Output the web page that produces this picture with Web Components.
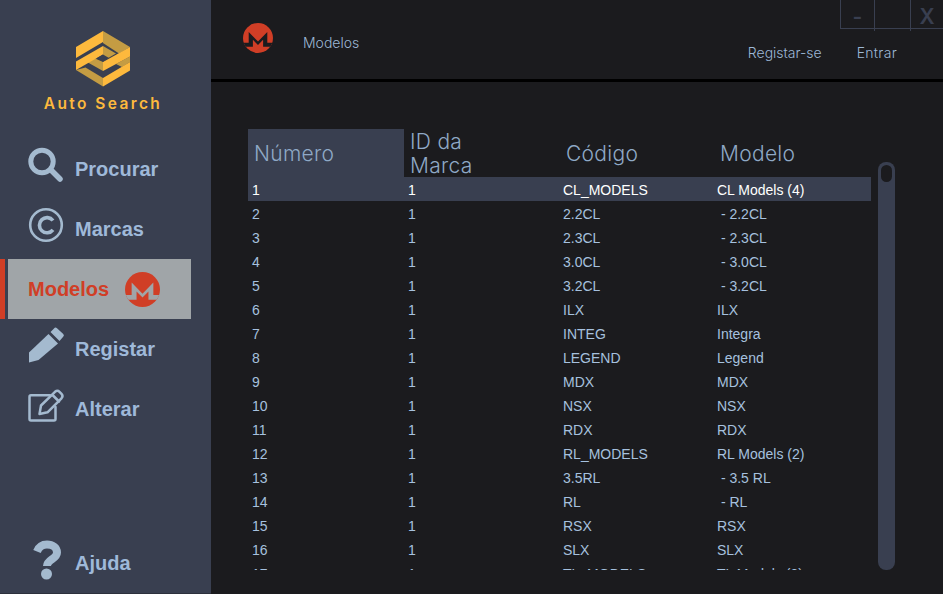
<!DOCTYPE html>
<html lang="pt">
<head>
<meta charset="utf-8">
<title>Auto Search</title>
<style>
  html, body { margin: 0; height: 100%; background: #1b1b1e; overflow: hidden; }
  app-shell { width: 943px; height: 594px; }
  .ico { display: block; width: 40px; height: 40px; overflow: visible; }
</style>
</head>
<body>
<app-shell>
  <app-sidebar slot="side">
    <nav-item>
      <svg slot="icon" class="ico" viewBox="28 149 40 40" fill="none" stroke="#a4bacf">
        <circle cx="42" cy="161.5" r="11.2" stroke-width="5"/>
        <path d="M52 171l8 8" stroke-width="5.5" stroke-linecap="round"/>
      </svg>
      Procurar
    </nav-item>
    <nav-item>
      <svg slot="icon" class="ico" viewBox="28 209 40 40" fill="none" stroke="#a4bacf">
        <circle cx="46" cy="225" r="15.8" stroke-width="2.6"/>
        <path d="M53 220.500a7.6 7.6 0 1 0 0 9.4" stroke-width="3.6"/>
      </svg>
      Marcas
    </nav-item>
    <nav-item active>
      Modelos
      <monero-mark slot="trail" size="35" cut="#a0a5a8"></monero-mark>
    </nav-item>
    <nav-item>
      <svg slot="icon" class="ico" viewBox="28 329 40 40" fill="#a4bacf">
        <path d="M29 352.500L48.500 334l9.500 9.500L38.500 360 29 362.500z"/>
        <path d="M50.500 332l3.500-3.500a2 2 0 0 1 3-.2l6 5.500a2 2 0 0 1 .2 3L59.500 341z"/>
      </svg>
      Registar
    </nav-item>
    <nav-item>
      <svg slot="icon" class="ico" viewBox="28 389 40 40" fill="none" stroke="#a4bacf" stroke-width="2.500" stroke-linejoin="round" stroke-linecap="round">
        <path d="M50 395.300H31a1.500 1.500 0 0 0-1.500 1.500V419a1.500 1.500 0 0 0 1.500 1.500h23a1.500 1.500 0 0 0 1.500-1.500V407"/>
        <path d="M39.500 414l1.500-8.500L55 391.800q2.500-2 4.500 0l2 2q2 2 0 4.500L47.500 412.300z"/>
        <path d="M52.500 395l6.500 6.500"/>
      </svg>
      Alterar
    </nav-item>
    <nav-item slot="foot">
      <svg slot="icon" class="ico" viewBox="28 543 40 40" fill="none" stroke="#a4bacf">
        <path d="M37 551.500c2-5 5.500-7 10-7 5.500 0 10 3 10 8 0 6.500-10 7-10 13.500" stroke-width="8"/>
        <circle cx="46.500" cy="574" r="5.500" fill="#a4bacf" stroke="none"/>
      </svg>
      Ajuda
    </nav-item>
  </app-sidebar>
  <top-bar slot="top"></top-bar>
  <models-table slot="main"></models-table>
</app-shell>

<script>
class AppShell extends HTMLElement {
  constructor() {
    super();
    this.attachShadow({ mode: "open" });
    this.shadowRoot.innerHTML = `
      <style>
        :host { display: grid; grid-template-columns: 211px 1fr; grid-template-rows: 82px 1fr; background: #1b1b1e; }
        .side { grid-row: 1 / 3; display: flex; min-height: 0; }
      </style>
      <div class="side"><slot name="side"></slot></div>
      <slot name="top"></slot>
      <slot name="main"></slot>
    `;
  }
}

class AppSidebar extends HTMLElement {
  constructor() {
    super();
    this.attachShadow({ mode: "open" });
    this.shadowRoot.innerHTML = `
      <style>
        :host { display: flex; flex-direction: column; flex: 1; background: #393f50; border-bottom: 1px solid #2c303c; box-sizing: border-box; }
        .logo { height: 139px; box-sizing: border-box; padding: 26px 5px 0 0; display: flex; flex-direction: column; align-items: center; }
        svg { display: block; width: 66px; height: 66px; }
        .name { font: 600 15.500px/16px Inter, sans-serif; letter-spacing: 2.400px; color: #fdb93d; margin-top: 4px; white-space: nowrap; }
        .foot { margin-top: auto; }
      </style>
      <div class="logo">
        <svg viewBox="0 0 66 66">
          <path fill="#c49c43" d="M33 5l27 16-11 6.500L33 17z"/>
          <path fill="#c49c43" d="M33 20l13 7.500L33 35z"/>
          <path fill="#c49c43" d="M33 36v9L17 36l7-4z"/>
          <path fill="#c49c43" d="M6 44l27 16.500V52L15.500 41.500z"/>
          <path fill="#c49c43" d="M60 30.500V36l-8 5-6-3z"/>
          <path fill="#fdb93d" d="M6 21L33 5v11L6 32z"/>
          <path fill="#fdb93d" d="M6 35.500L33 20v8.500L6 44z"/>
          <path fill="#fdb93d" d="M33 36l27-15v9.500L33 45z"/>
          <path fill="#fdb93d" d="M33 52l27-16v8.500L33 60.500z"/>
          <path fill="#393f50" d="M27 32l6-3.500 6 3.500-6 3.500z"/>
        </svg>
        <div class="name">Auto Search</div>
      </div>
      <slot></slot>
      <div class="foot"><slot name="foot"></slot></div>
    `;
  }
}

class NavItem extends HTMLElement {
  constructor() {
    super();
    this.attachShadow({ mode: "open" });
    this.shadowRoot.innerHTML = `
      <style>
        :host { display: block; height: 60px; box-sizing: border-box; font: bold 20px "Liberation Sans", Arial, sans-serif; color: #9fb9d9; }
        .box { height: 100%; display: flex; align-items: center; padding-left: 28px; box-sizing: border-box; white-space: nowrap; }
        .icon { width: 47px; flex: none; }
        :host([active]) { width: 191px; border-left: 5px solid #d03e26; color: #d03e26; }
        :host([active]) .box { margin-left: 3px; padding-left: 20px; background: #a0a5a8; }
        :host([active]) .icon { display: none; }
        .trail { margin-left: 16px; display: flex; }
      </style>
      <div class="box">
        <div class="icon"><slot name="icon"></slot></div>
        <slot></slot>
        <div class="trail"><slot name="trail"></slot></div>
      </div>
    `;
  }
}

class MoneroMark extends HTMLElement {
  constructor() {
    super();
    this.attachShadow({ mode: "open" });
  }

  connectedCallback() {
    const size = this.getAttribute("size") || 30;
    const cut = this.getAttribute("cut") || "#1b1b1e";
    this.shadowRoot.innerHTML = `
      <style>
        :host { display: block; width: ${size}px; height: ${size}px; }
        svg { display: block; width: 100%; height: 100%; }
      </style>
      <svg viewBox="0 0 100 100">
        <defs><clipPath id="disc"><circle cx="50" cy="50" r="50"/></clipPath></defs>
        <circle cx="50" cy="50" r="50" fill="#d03e26"/>
        <path clip-path="url(#disc)" fill="${cut}" d="M0 66h19V30l31 32 31-32v36h19v13H67V56L50 73 33 56v23H0z"/>
      </svg>
    `;
  }
}

class TopBar extends HTMLElement {
  constructor() {
    super();
    this.attachShadow({ mode: "open" });
    this.shadowRoot.innerHTML = `
      <style>
        :host { display: flex; justify-content: space-between; height: 82px; box-sizing: border-box; border-bottom: 3px solid #000; font: 300 14px/16px Inter, sans-serif; color: #9db8d6; }
        .crumb { display: flex; align-items: flex-start; padding: 23px 0 0 32px; }
        .crumb span { margin: 12px 0 0 30px; }
        .right { display: flex; flex-direction: column; align-items: flex-end; }
        .win { display: grid; grid-template-columns: 33px 36px 33px; height: 29px; box-sizing: border-box; border-left: 1px solid #393f50; border-bottom: 1px solid #393f50; color: #393f50; }
        .win div { display: flex; align-items: center; justify-content: center; font: 600 21px/28px Inter, sans-serif; padding-top: 3px; box-sizing: border-box; }
        .win div + div { border-left: 1px solid #393f50; }
        .links { display: flex; gap: 35px; margin: 16px 46px 0 0; }
        .links span:last-child { min-width: 40px; letter-spacing: .3px; }
      </style>
      <div class="crumb">
        <monero-mark size="30"></monero-mark>
        <span>Modelos</span>
      </div>
      <div class="right">
        <div class="win"><div>-</div><div></div><div>X</div></div>
        <div class="links"><span>Registar-se</span><span>Entrar</span></div>
      </div>
    `;
  }
}

const MODELS = [
  ["CL_MODELS", "CL Models (4)"], ["2.2CL", " - 2.2CL"], ["2.3CL", " - 2.3CL"], ["3.0CL", " - 3.0CL"],
  ["3.2CL", " - 3.2CL"], ["ILX", "ILX"], ["INTEG", "Integra"], ["LEGEND", "Legend"], ["MDX", "MDX"],
  ["NSX", "NSX"], ["RDX", "RDX"], ["RL_MODELS", "RL Models (2)"], ["3.5RL", " - 3.5 RL"], ["RL", " - RL"],
  ["RSX", "RSX"], ["SLX", "SLX"], ["TL_MODELS", "TL Models (3)"],
];

class ModelsTable extends HTMLElement {
  constructor() {
    super();
    this.attachShadow({ mode: "open" });
    const rows = MODELS.map((m, i) => `
      <div class="row${i === 0 ? " sel" : ""}">
        <div>${i + 1}</div><div>1</div><div>${m[0]}</div><div>${m[1]}</div>
      </div>`).join("");
    this.shadowRoot.innerHTML = `
      <style>
        :host { display: flex; gap: 7px; padding: 47px 0 0 37px; height: 441px; font: 14px/26px "Liberation Sans", Arial, sans-serif; color: #a6c1df; }
        .table { width: 623px; height: 441px; overflow: hidden; }
        .head, .row { display: grid; grid-template-columns: 156px 155px 154px 158px; }
        .head { height: 48px; font: 300 21px/24px Inter, sans-serif; letter-spacing: .3px; color: #8fa9c6; }
        .head div { padding: 1px 0 0 7px; align-self: center; }
        .head div:nth-child(2) { padding-left: 6px; }
        .head .on { align-self: stretch; background: #393f50; display: flex; align-items: center; padding-left: 6px; }
        .row { height: 24px; }
        .row div { padding-left: 4px; white-space: pre; }
        .sel { background: #393f50; color: #fff; }
        .bar { width: 17px; height: 408px; margin-top: 33px; border-radius: 8px; background: #393f50; padding: 3px; box-sizing: border-box; }
        .thumb { width: 11px; height: 17px; border-radius: 6px; background: #1b1b1e; }
      </style>
      <div class="table">
        <div class="head">
          <div class="on">Número</div>
          <div>ID da<br>Marca</div>
          <div>Código</div>
          <div>Modelo</div>
        </div>
        ${rows}
      </div>
      <div class="bar"><div class="thumb"></div></div>
    `;
  }
}

customElements.define("app-shell", AppShell);
customElements.define("app-sidebar", AppSidebar);
customElements.define("nav-item", NavItem);
customElements.define("monero-mark", MoneroMark);
customElements.define("top-bar", TopBar);
customElements.define("models-table", ModelsTable);
</script>
</body>
</html>
